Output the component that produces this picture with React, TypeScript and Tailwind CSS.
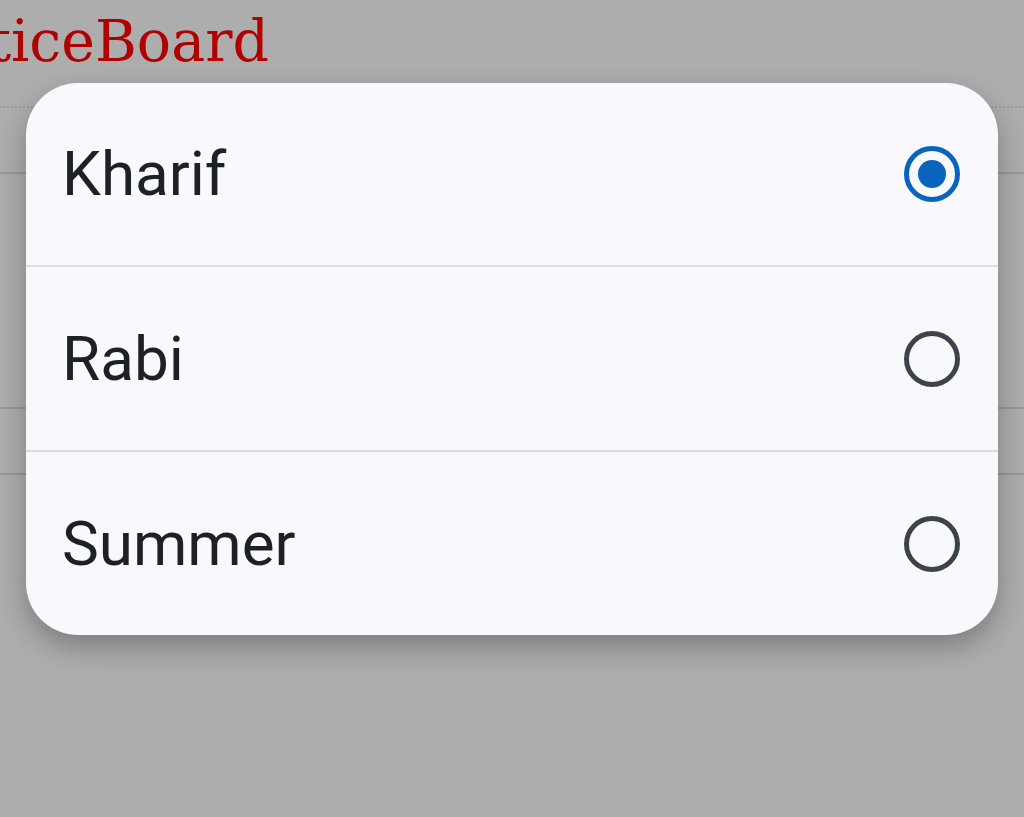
import { useState } from "react";

const seasons = ["Kharif", "Rabi", "Summer"];

function Radio({ checked }: { checked: boolean }) {
  if (checked) {
    return (
      <svg width="60" height="60" viewBox="0 0 60 60" className="shrink-0">
        <circle cx="30" cy="30" r="25.5" fill="none" stroke="#0a63bd" strokeWidth="5" />
        <circle cx="30" cy="30" r="14" fill="#0a63bd" />
      </svg>
    );
  }
  return (
    <svg width="60" height="60" viewBox="0 0 60 60" className="shrink-0">
      <circle cx="30" cy="30" r="25.5" fill="none" stroke="#3d424c" strokeWidth="5" />
    </svg>
  );
}

export default function App() {
  const [selected, setSelected] = useState("Kharif");

  return (
    <div className="relative w-[1024px] h-[817px] overflow-hidden bg-[#adadad]">
      {/* page behind the scrim */}
      <div className="flex flex-col">
        <div className="h-[83px] flex items-end overflow-hidden">
          <h1 className="ml-[-96px] text-[57px] leading-none pb-[13px] text-[#b00000] font-['DejaVu_Serif',serif] whitespace-nowrap">
            NoticeBoard
          </h1>
        </div>
        <div className="h-[23px]" />
        <div className="border-t-2 border-dotted border-[#9a9a9a]" />
        <div className="h-[64px]" />
        <div className="border-t-2 border-[#999999]" />
        <div className="h-[233px]" />
        <div className="border-t-2 border-[#999999]" />
        <div className="h-[64px]" />
        <div className="border-t-2 border-[#999999]" />
      </div>

      {/* dialog */}
      <div className="absolute left-[26px] top-[83px] w-[972px] rounded-[52px] bg-[#f8f8fd] shadow-[0_12px_28px_rgba(0,0,0,0.28)] overflow-hidden">
        {seasons.map((s, i) => (
          <button
            key={s}
            onClick={() => setSelected(s)}
            className={`w-full flex items-center justify-between pl-[36px] pr-[36px] text-left ${
              i > 0 ? "h-[185px] border-t-2 border-[#dcdce1]" : "h-[182px]"
            }`}
          >
            <span className="text-[62px] leading-none text-[#1d2027] font-['Roboto',sans-serif]">{s}</span>
            <Radio checked={selected === s} />
          </button>
        ))}
      </div>
    </div>
  );
}
